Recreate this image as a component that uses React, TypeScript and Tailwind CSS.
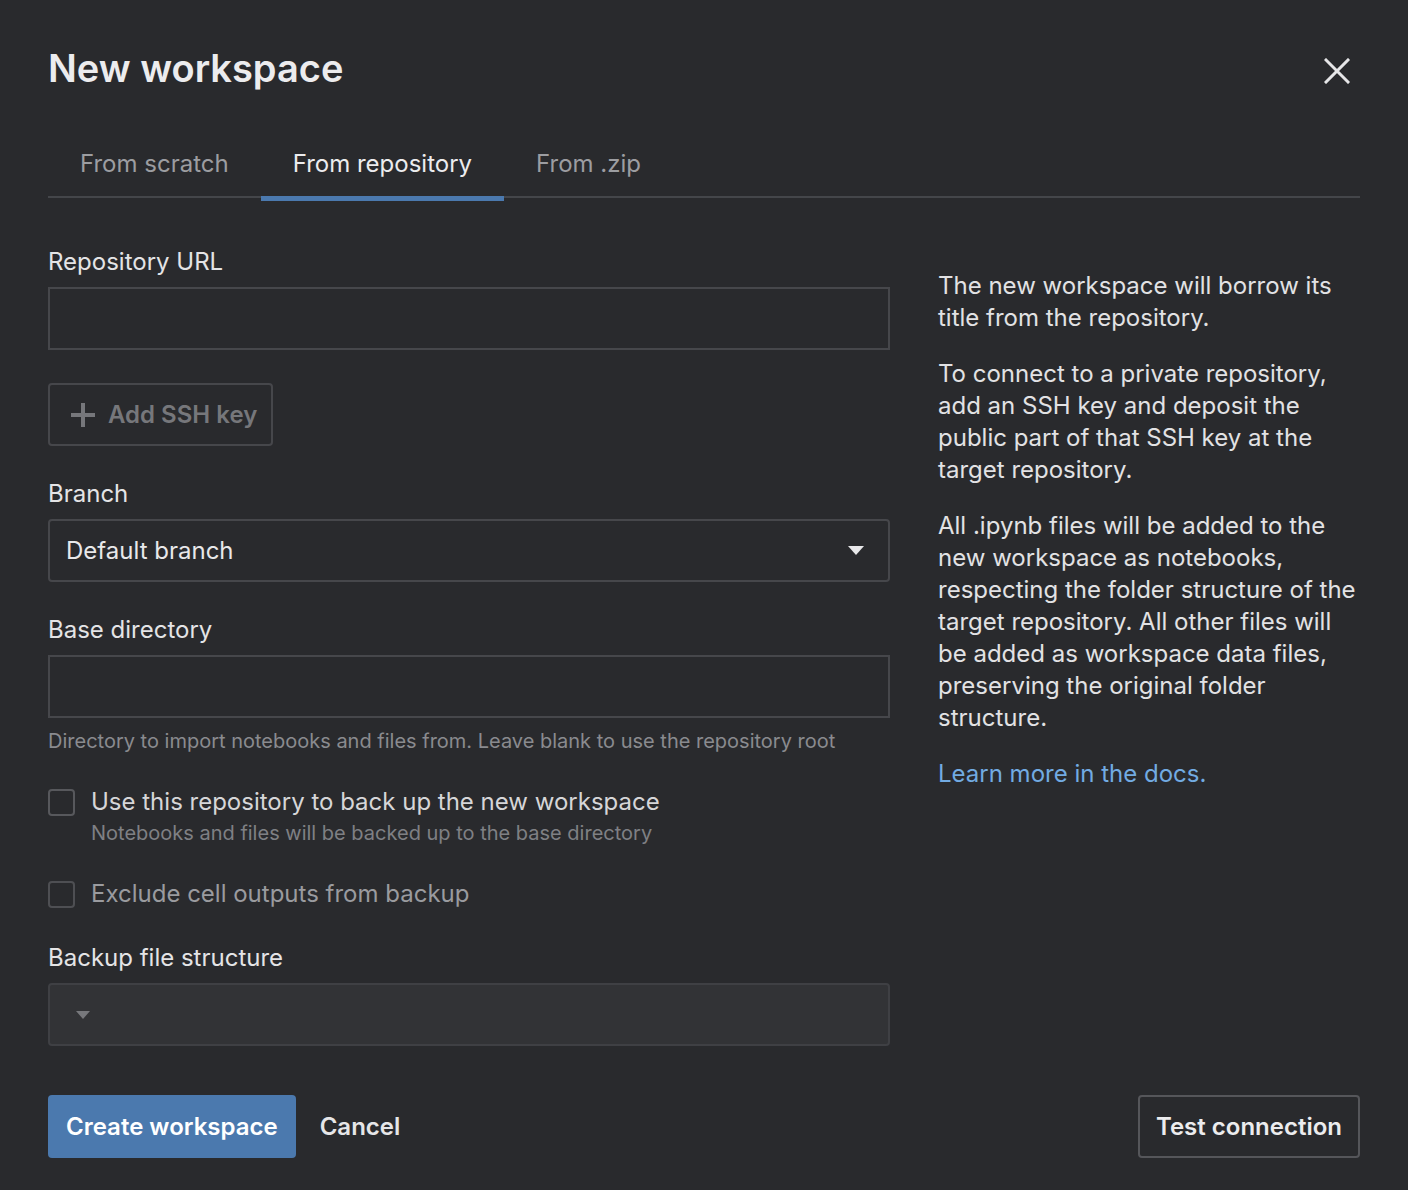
import React from "react";

const font = { fontFamily: "Inter, 'Noto Sans', sans-serif" };

function Label({ children, className = "" }: { children: React.ReactNode; className?: string }) {
  return <div className={`pt-[1px] text-[24px] leading-[32px] text-[#e4e4e6] ${className}`}>{children}</div>;
}

function Caret({ color }: { color: string }) {
  return (
    <svg width="16" height="9" viewBox="0 0 16 9">
      <path d="M0 0 L16 0 L8 9 Z" fill={color} />
    </svg>
  );
}

export default function App() {
  return (
    <div className="min-h-[1190px] w-full bg-[#292a2d] px-12 pt-[46px] pb-[33px]" style={font}>
      <div className="flex items-center justify-between">
        <h1 className="text-[38px] leading-[44px] font-semibold text-[#ececee]">New workspace</h1>
        <button className="mr-[10px] mt-[6px] text-[#e6e6e8]">
          <svg width="26" height="26" viewBox="0 0 26 26">
            <path d="M2 2 L24 24 M24 2 L2 24" stroke="currentColor" strokeWidth="3" strokeLinecap="square" />
          </svg>
        </button>
      </div>

      <div className="mt-[41px] flex border-b-2 border-[#44464a]">
        <div className="px-8 pt-[17px] pb-[16px] text-[24px] leading-[32px] text-[#9c9da1]">From scratch</div>
        <div className="relative px-8 pt-[17px] pb-[16px] text-[24px] leading-[32px] text-[#ececee]">
          From repository
          <span className="absolute left-0 right-0 -bottom-[5px] h-[5px] bg-[#4b79ae]" />
        </div>
        <div className="px-8 pt-[17px] pb-[16px] text-[24px] leading-[32px] text-[#9c9da1]">From .zip</div>
      </div>

      <div className="mt-[47px] flex gap-12">
        <div className="w-[842px] shrink-0">
          <Label>Repository URL</Label>
          <div className="mt-[9px] h-[63px] border-2 border-[#46474b]" />

          <button className="mt-[33px] flex h-[63px] items-center gap-3 rounded-[4px] border-2 border-[#46474b] pl-5 pr-[14px] text-[24px] font-semibold text-[#76777b]">
            <svg width="26" height="26" viewBox="0 0 26 26">
              <path d="M13 1 V25 M1 13 H25" stroke="currentColor" strokeWidth="4" />
            </svg>
            Add SSH key
          </button>

          <Label className="mt-[31px]">Branch</Label>
          <div className="mt-[9px] flex h-[63px] items-center justify-between rounded-[4px] border-2 border-[#46474b] pl-4 pr-6">
            <span className="text-[24px] text-[#e8e8ea]">Default branch</span>
            <Caret color="#e8e8ea" />
          </div>

          <Label className="mt-[31px]">Base directory</Label>
          <div className="mt-[9px] h-[63px] border-2 border-[#46474b]" />
          <div className="mt-[9px] text-[20px] leading-[28px] text-[#8a8b8f]">
            Directory to import notebooks and files from. Leave blank to use the repository root
          </div>

          <div className="mt-[30px] flex gap-4">
            <div className="mt-[4px] h-[27px] w-[27px] shrink-0 rounded-[4px] border-2 border-[#57585c]" />
            <div>
              <div className="pt-[1px] text-[24px] leading-[32px] text-[#d6d6d8]">Use this repository to back up the new workspace</div>
              <div className="mt-[1px] text-[20px] leading-[28px] text-[#7f8084]">Notebooks and files will be backed up to the base directory</div>
            </div>
          </div>

          <div className="mt-[30px] flex gap-4">
            <div className="mt-[4px] h-[27px] w-[27px] shrink-0 rounded-[4px] border-2 border-[#4e4f53]" />
            <div className="pt-[1px] text-[24px] leading-[32px] text-[#9a9b9f]">Exclude cell outputs from backup</div>
          </div>

          <Label className="mt-[31px]">Backup file structure</Label>
          <div className="mt-[9px] flex h-[63px] items-center rounded-[4px] border-2 border-[#3f4044] bg-[#323336] pl-[26px]">
            <svg width="14" height="8" viewBox="0 0 14 8">
              <path d="M0 0 L14 0 L7 8 Z" fill="#77787c" />
            </svg>
          </div>
        </div>

        <div className="w-[422px] pt-[25px] text-[24px] leading-[32px] text-[#e2e2e4]">
          <p>The new workspace will borrow its title from the repository.</p>
          <p className="mt-6">
            To connect to a private repository, add an SSH key and deposit the public part of that SSH key at the target repository.
          </p>
          <p className="mt-6">
            All .ipynb files will be added to the new workspace as notebooks, respecting the folder structure of the target repository. All other files will be added as workspace data files, preserving the original folder structure.
          </p>
          <p className="mt-6 text-[#72abe2]">Learn more in the docs.</p>
        </div>
      </div>

      <div className="mt-[49px] flex items-center justify-between">
        <div className="flex items-center gap-6">
          <button className="h-[63px] rounded-[4px] bg-[#4b79ae] px-[18px] text-[24px] font-semibold text-white">
            Create workspace
          </button>
          <button className="text-[24px] font-semibold text-[#e6e6e8]">Cancel</button>
        </div>
        <button className="h-[63px] rounded-[4px] border-2 border-[#55565a] px-4 text-[24px] font-semibold text-[#ececee]">
          Test connection
        </button>
      </div>
    </div>
  );
}
